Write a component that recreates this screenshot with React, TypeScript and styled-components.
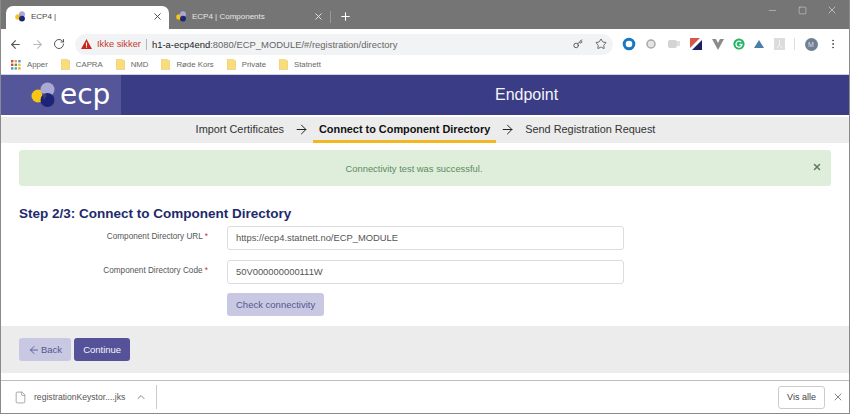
import styled, { createGlobalStyle } from "styled-components";
import { ArrowLeft, ArrowRight, RotateCw, X, Plus, Minus, Square, Star, Key, ChevronUp, File, EllipsisVertical } from "lucide-react";

const GlobalStyle = createGlobalStyle`
	html, body { margin: 0; padding: 0; }
	body { font-family: "Liberation Sans", Arial, sans-serif; background: #fff; }
	* { box-sizing: border-box; }
`;

const Logo = ({ size }: { size: number }) => (
	<svg width={size} height={size} viewBox="0 0 26 26">
		<circle cx="7" cy="14" r="6.5" fill="#f5c518" />
		<circle cx="16.5" cy="7.5" r="7" fill="#a9a9d4" />
		<circle cx="16.5" cy="18" r="7" fill="#1d2375" />
		<path d="M11 11 L16 13 L13 18 Z" fill="#3a3d85" />
	</svg>
);

const AppsIcon = () => (
	<svg width="10" height="10" viewBox="0 0 10 10">
		{["#d9453a", "#e8a33a", "#4a8fe0", "#d9453a", "#5a9a5a", "#e8c33a", "#4a8fe0", "#5ab05a", "#e8a33a"].map((c, i) => (
			<rect key={i} x={(i % 3) * 3.6} y={Math.floor(i / 3) * 3.6} width="2.4" height="2.4" fill={c} />
		))}
	</svg>
);

const Folder = () => (
	<svg width="9" height="11" viewBox="0 0 9 11">
		<path d="M0 0.5 H6 L9 2 V10.5 H0 Z" fill="#f9dc7c" stroke="#e5c766" strokeWidth="0.5" />
	</svg>
);

const Warning = () => (
	<svg width="11" height="10" viewBox="0 0 12 11">
		<path d="M6 0 L12 11 H0 Z" fill="#c5281c" />
		<rect x="5.4" y="3.8" width="1.2" height="3.8" fill="#fff" />
		<rect x="5.4" y="8.3" width="1.2" height="1.2" fill="#fff" />
	</svg>
);

const Extensions = () => (
	<>
		<svg width="14" height="14" viewBox="0 0 14 14"><circle cx="7" cy="7" r="4.8" fill="none" stroke="#1a78c2" strokeWidth="3" /></svg>
		<svg width="12" height="12" viewBox="0 0 12 12"><circle cx="6" cy="6" r="4" fill="#e4e4e4" stroke="#a8a8a8" strokeWidth="1.5" /></svg>
		<svg width="14" height="12" viewBox="0 0 14 12"><rect x="1" y="2" width="9" height="8" rx="2" fill="#d4d4d4" /><rect x="10" y="3" width="3" height="5" fill="#e0e0e0" /></svg>
		<svg width="12" height="12" viewBox="0 0 12 12"><rect width="12" height="12" fill="#fff" /><path d="M0 0 H10 L0 10 Z" fill="#d9574a" /><path d="M12 2 V12 H2 Z" fill="#1c2260" /></svg>
		<svg width="12" height="11" viewBox="0 0 12 11"><path d="M0 0 H4 L6 4 L8 0 H12 L6 11 Z" fill="#8b8b8b" /></svg>
		<svg width="12" height="12" viewBox="0 0 12 12"><circle cx="6" cy="6" r="5.6" fill="#25b365" /><path d="M8.3 4.2 A3 3 0 1 0 9 6.5 H6.3" fill="none" stroke="#fff" strokeWidth="1.3" /></svg>
		<svg width="10" height="8" viewBox="0 0 10 8"><path d="M5 0 L10 8 H0 Z" fill="#4a7fa8" /></svg>
		<svg width="11" height="12" viewBox="0 0 11 12"><rect width="11" height="12" fill="#dcdcdc" /><path d="M5.5 2 V7 L3 10 M5.5 7 L8 10" stroke="#f2f2f2" fill="none" /></svg>
	</>
);

export default function App() {
	return (
		<Frame>
			<GlobalStyle />
			<TitleBar>
				<Tab $active>
					<Logo size={11} />
					<TabTitle $active>ECP4 |</TabTitle>
					<X size={11} color="#444" strokeWidth={2} />
				</Tab>
				<Tab>
					<Logo size={11} />
					<TabTitle>ECP4 | Components</TabTitle>
					<X size={11} color="#e8e8e8" strokeWidth={2} />
				</Tab>
				<TabDivider />
				<NewTab>
					<Plus size={13} color="#fff" strokeWidth={2} />
				</NewTab>
				<WindowControls>
					<Minus size={11} color="#d8d8d8" strokeWidth={1.2} />
					<Square size={9} color="#e8e8e8" strokeWidth={1.2} />
					<X size={12} color="#e8e8e8" strokeWidth={1.2} />
				</WindowControls>
			</TitleBar>
			<Toolbar>
				<NavIcons>
					<ArrowLeft size={13} color="#555" strokeWidth={2} />
					<ArrowRight size={13} color="#bbb" strokeWidth={2} />
					<RotateCw size={12} color="#555" strokeWidth={2} />
				</NavIcons>
				<AddressBar>
					<Warning />
					<Insecure>Ikke sikker</Insecure>
					<AddressDivider />
					<Url>
						<strong>h1-a-ecp4end</strong>:8080/ECP_MODULE/#/registration/directory
					</Url>
					<AddressActions>
						<Key size={10} color="#444" strokeWidth={2} />
						<Star size={12} color="#444" strokeWidth={1.6} />
					</AddressActions>
				</AddressBar>
				<ExtensionRow>
					<Extensions />
					<ExtensionDivider />
					<Avatar>M</Avatar>
					<EllipsisVertical size={12} color="#555" strokeWidth={2} />
				</ExtensionRow>
			</Toolbar>
			<Bookmarks>
				<Bookmark><AppsIcon />Apper</Bookmark>
				<Bookmark><Folder />CAPRA</Bookmark>
				<Bookmark><Folder />NMD</Bookmark>
				<Bookmark><Folder />Røde Kors</Bookmark>
				<Bookmark><Folder />Private</Bookmark>
				<Bookmark><Folder />Statnett</Bookmark>
			</Bookmarks>
			<Page>
				<Header>
					<LogoPanel>
						<Logo size={26} />
						<LogoText>ecp</LogoText>
					</LogoPanel>
					<HeaderTitle>Endpoint</HeaderTitle>
				</Header>
				<Steps>
					<Step>Import Certificates</Step>
					<StepArrow size={15} color="#222" strokeWidth={1.6} />
					<Step $active>Connect to Component Directory</Step>
					<StepArrow size={15} color="#222" strokeWidth={1.6} />
					<Step>Send Registration Request</Step>
				</Steps>
				<Alert>
					<AlertText>Connectivity test was successful.</AlertText>
					<AlertClose>
						<X size={10} color="#5d7a5d" strokeWidth={3.5} />
					</AlertClose>
				</Alert>
				<StepTitle>Step 2/3: Connect to Component Directory</StepTitle>
				<FormRow>
					<FieldLabel>Component Directory URL <Required>*</Required></FieldLabel>
					<Field>https://ecp4.statnett.no/ECP_MODULE</Field>
				</FormRow>
				<FormRow>
					<FieldLabel>Component Directory Code <Required>*</Required></FieldLabel>
					<Field>50V000000000111W</Field>
				</FormRow>
				<CheckRow>
					<Button $variant="light">Check connectivity</Button>
				</CheckRow>
				<Footer>
					<Button $variant="light">
						<ArrowLeft size={12} strokeWidth={1.8} />Back
					</Button>
					<Button $variant="solid">Continue</Button>
				</Footer>
			</Page>
			<DownloadBar>
				<DownloadItem>
					<File size={13} color="#888" strokeWidth={1.3} />
					<FileName>registrationKeystor....jks</FileName>
					<ChevronUp size={12} color="#666" strokeWidth={1.6} />
				</DownloadItem>
				<ShowAll>Vis alle</ShowAll>
				<X size={12} color="#666" strokeWidth={1.6} />
			</DownloadBar>
		</Frame>
	);
}

const Frame = styled.div`
	width: 850px;
	height: 414px;
	display: flex;
	flex-direction: column;
	overflow: hidden;
	background: #fff;
	border-left: 1px solid #8a8a8a;
	border-right: 1px solid #8a8a8a;
	border-bottom: 1px solid #8a8a8a;
`;

const TitleBar = styled.div`
	height: 29px;
	flex: none;
	background: #757575;
	display: flex;
	align-items: flex-end;
	padding-left: 5px;
`;

const Tab = styled.div<{ $active?: boolean }>`
	width: ${({ $active }) => ($active ? "163px" : "161px")};
	height: 23px;
	padding: 0 6px 2px ${({ $active }) => ($active ? "9px" : "7px")};
	display: flex;
	align-items: center;
	gap: 5px;
	border-radius: 7px 7px 0 0;
	background: ${({ $active }) => ($active ? "#fff" : "transparent")};
`;

const TabTitle = styled.span<{ $active?: boolean }>`
	flex: 1;
	font-size: 8px;
	color: ${({ $active }) => ($active ? "#444" : "#e6e6e6")};
`;

const TabDivider = styled.div`
	width: 1px;
	height: 12px;
	margin: 0 0 6px 0;
	background: #999;
`;

const NewTab = styled.div`
	width: 29px;
	height: 23px;
	padding-bottom: 3px;
	display: flex;
	align-items: center;
	justify-content: center;
`;

const WindowControls = styled.div`
	margin-left: auto;
	width: 96px;
	height: 29px;
	padding: 0 11px 9px 14px;
	display: flex;
	align-items: center;
	justify-content: space-between;
`;

const Toolbar = styled.div`
	height: 30px;
	flex: none;
	display: flex;
	align-items: center;
	padding: 0 10px 0 8px;
`;

const NavIcons = styled.div`
	width: 66px;
	display: flex;
	align-items: center;
	gap: 9px;
`;

const AddressBar = styled.div`
	width: 538px;
	height: 21px;
	display: flex;
	align-items: center;
	padding: 0 6px;
	background: #f1f3f4;
	border-radius: 11px;
`;

const Insecure = styled.span`
	margin-left: 5px;
	font-size: 9.3px;
	color: #c5392c;
`;

const AddressDivider = styled.div`
	width: 1px;
	height: 11px;
	margin: 0 5px;
	background: #b5b5b5;
`;

const Url = styled.span`
	font-size: 9.45px;
	color: #666;
	strong {
		font-weight: 400;
		color: #222;
	}
`;

const AddressActions = styled.div`
	margin-left: auto;
	display: flex;
	align-items: center;
	gap: 12px;
`;

const ExtensionRow = styled.div`
	flex: 1;
	display: flex;
	align-items: center;
	justify-content: space-between;
	padding-left: 9px;
	svg {
		flex: none;
	}
`;

const ExtensionDivider = styled.div`
	width: 1px;
	height: 12px;
	background: #ddd;
`;

const Avatar = styled.div`
	width: 13px;
	height: 13px;
	border-radius: 50%;
	background: #708090;
	color: #dde;
	font-size: 7px;
	text-align: center;
	line-height: 13px;
`;

const Bookmarks = styled.div`
	height: 15px;
	flex: none;
	display: flex;
	align-items: center;
	gap: 13px;
	padding: 0 0 4px 10px;
`;

const Bookmark = styled.div`
	display: flex;
	align-items: center;
	gap: 6px;
	font-size: 7.8px;
	color: #666;
`;

const Page = styled.div`
	flex: 1;
	display: flex;
	flex-direction: column;
	border-top: 1px solid #d0d2e0;
`;

const Header = styled.div`
	height: 40px;
	flex: none;
	display: flex;
	align-items: center;
	background: #3a3d85;
`;

const LogoPanel = styled.div`
	width: 120px;
	height: 40px;
	display: flex;
	align-items: center;
	padding-left: 30px;
	gap: 3px;
	background: #55559a;
`;

const LogoText = styled.span`
	font-family: "DejaVu Sans", sans-serif;
	font-size: 28px;
	line-height: 30px;
	color: #fff;
`;

const HeaderTitle = styled.div`
	margin-left: 374px;
	font-size: 16px;
	color: #f4f4fa;
`;

const Steps = styled.div`
	height: 26px;
	flex: none;
	margin-top: 2px;
	display: flex;
	justify-content: center;
	align-items: flex-start;
	gap: 4px;
	padding-left: 1px;
	background: #ececec;
`;

const Step = styled.div<{ $active?: boolean }>`
	height: 26px;
	padding: 5px 6px 0;
	font-size: 10.9px;
	line-height: 14px;
	font-weight: ${({ $active }) => ($active ? 700 : 400)};
	color: ${({ $active }) => ($active ? "#111" : "#333")};
	border-bottom: 3px solid ${({ $active }) => ($active ? "#f0b81e" : "transparent")};
`;

const StepArrow = styled(ArrowRight)`
	flex: none;
	margin-top: 5px;
`;

const Alert = styled.div`
	height: 36px;
	flex: none;
	margin: 7px 18px 0;
	padding-right: 22px;
	display: flex;
	align-items: center;
	justify-content: center;
	position: relative;
	background: #dfeedb;
	border-radius: 3px;
`;

const AlertText = styled.span`
	font-size: 9.4px;
	color: #5e8a5e;
`;

const AlertClose = styled.span`
	position: absolute;
	right: 9px;
	top: 12px;
	line-height: 0;
`;

const StepTitle = styled.h2`
	margin: 19px 0 0 18px;
	font-size: 13.5px;
	line-height: 17px;
	font-weight: 700;
	color: #1d2a6b;
`;

const FormRow = styled.div`
	margin-top: 4px;
	margin-bottom: 6px;
	display: flex;
	align-items: flex-start;
`;

const FieldLabel = styled.label`
	width: 207px;
	padding-top: 5.5px;
	text-align: right;
	font-size: 8.2px;
	color: #555;
`;

const Required = styled.span`
	color: #c5392c;
`;

const Field = styled.div`
	width: 397px;
	height: 24px;
	margin-left: 19px;
	padding: 0 8px;
	font-size: 9.4px;
	line-height: 22px;
	color: #555;
	background: #fff;
	border: 1px solid #dcdcdc;
	border-radius: 3px;
`;

const CheckRow = styled.div`
	margin-top: 3px;
	padding-left: 226px;
	display: flex;
`;

const Button = styled.button<{ $variant: "light" | "solid" }>`
	height: 23px;
	padding: 0 9px;
	display: inline-flex;
	align-items: center;
	gap: 1px;
	border: 0;
	border-radius: 3px;
	font-family: inherit;
	font-size: 9.5px;
	background: ${({ $variant }) => ($variant === "solid" ? "#55529a" : "#c9c8e2")};
	color: ${({ $variant }) => ($variant === "solid" ? "#f4f4fa" : "#565590")};
`;

const Footer = styled.div`
	height: 47px;
	flex: none;
	margin-top: 10px;
	padding: 12px 18px;
	display: flex;
	gap: 3px;
	background: #ececec;
`;

const DownloadBar = styled.div`
	height: 33px;
	flex: none;
	margin-top: auto;
	display: flex;
	align-items: center;
	padding-right: 5px;
	border-top: 1px solid #bdbdbd;
`;

const DownloadItem = styled.div`
	width: 156px;
	height: 24px;
	padding: 0 9px 0 13px;
	display: flex;
	align-items: center;
	gap: 7px;
	border-right: 1px solid #ccc;
	svg {
		flex: none;
	}
`;

const FileName = styled.span`
	flex: 1;
	font-size: 8.6px;
	color: #555;
	white-space: nowrap;
`;

const ShowAll = styled.div`
	margin-left: auto;
	margin-right: 7px;
	width: 47px;
	height: 23px;
	text-align: center;
	font-size: 9px;
	line-height: 21px;
	color: #444;
	border: 1px solid #ccc;
	border-radius: 3px;
`;
